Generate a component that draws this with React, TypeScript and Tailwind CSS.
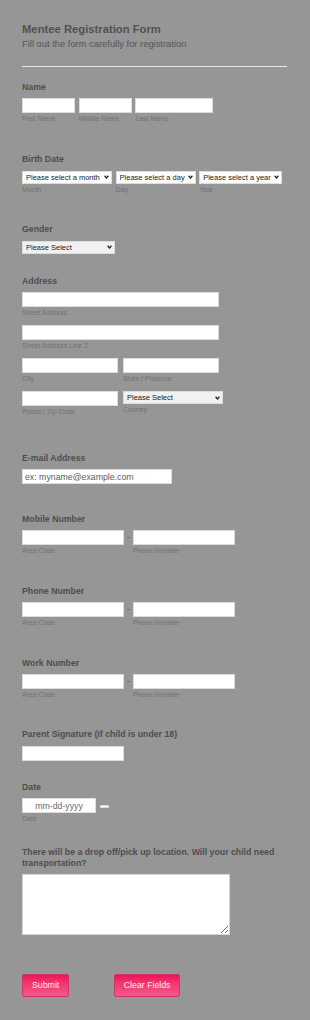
import React from "react";

const label = "block text-[8.75px] leading-[11px] font-bold text-[#4e4e4e]";
const sub = "block mt-[1px] text-[6.9px] leading-[9px] text-[#727272]";
const inp = "block h-[15px] bg-white border border-[#dddddd] outline-none";

function Sel({ text, w, bg }: { text: string; w: string; bg: string }) {
  return (
    <div className={`relative ${w}`}>
      <select
        className={`appearance-none block w-full h-[13px] ${bg} border border-[#dddddd] pl-[3px] pr-[10px] text-[7.5px] leading-[11px] text-[#1a1a1a] outline-none`}
        defaultValue="x"
      >
        <option value="x">{text}</option>
      </select>
      <svg
        className="absolute right-[3px] top-[4.5px] pointer-events-none"
        width="5"
        height="4"
        viewBox="0 0 10 8"
      >
        <path d="M1.2 1.5 L5 6 L8.8 1.5" stroke="#1e1e1e" strokeWidth="2.4" fill="none" />
      </svg>
    </div>
  );
}

function PhoneRow() {
  return (
    <div className="flex mt-[5px]">
      <div className="w-[102px]">
        <input className={`${inp} w-full`} />
        <span className={sub}>Area Code</span>
      </div>
      <div className="w-[9px] h-[15px] flex items-center justify-center">
        <div className="w-[3px] h-[1px] bg-[#6e6e6e]" />
      </div>
      <div className="w-[102px]">
        <input className={`${inp} w-full`} />
        <span className={sub}>Phone Number</span>
      </div>
    </div>
  );
}

export default function App() {
  return (
    <div className="min-h-[1020px] w-full bg-[#969696] font-['Liberation_Sans',Arial,sans-serif]">
      <div className="pt-[22px] px-[22px] pb-[23px]">
        <h1 className="text-[11.25px] leading-[14px] font-bold text-[#515151]">Mentee Registration Form</h1>
        <p className="mt-[2px] text-[9.375px] leading-[12px] text-[#555]">
          Fill out the form carefully for registration
        </p>
        <div className="mt-[16px] h-px w-[265px] bg-[#e8e8e8]" />

        {/* Name */}
        <span className={`${label} mt-[14.5px]`}>Name</span>
        <div className="mt-[5px] flex gap-[3.4px]">
          <div className="w-[53.3px]">
            <input className={`${inp} w-full`} />
            <span className={sub}>First Name</span>
          </div>
          <div className="w-[53.3px]">
            <input className={`${inp} w-full`} />
            <span className={sub}>Middle Name</span>
          </div>
          <div className="w-[77.7px]">
            <input className={`${inp} w-full`} />
            <span className={sub}>Last Name</span>
          </div>
        </div>

        {/* Birth Date */}
        <span className={`${label} mt-[31.5px]`}>Birth Date</span>
        <div className="mt-[5.5px] flex gap-[3.6px]">
          <div>
            <Sel text="Please select a month" w="w-[90px]" bg="bg-white" />
            <span className={`${sub} mt-[1.5px]`}>Month</span>
          </div>
          <div>
            <Sel text="Please select a day" w="w-[80px]" bg="bg-white" />
            <span className={`${sub} mt-[1.5px]`}>Day</span>
          </div>
          <div>
            <Sel text="Please select a year" w="w-[83px]" bg="bg-white" />
            <span className={`${sub} mt-[1.5px]`}>Year</span>
          </div>
        </div>

        {/* Gender */}
        <span className={`${label} mt-[30.5px]`}>Gender</span>
        <div className="mt-[5.7px]">
          <Sel text="Please Select" w="w-[93px]" bg="bg-[#f1f1f1]" />
        </div>

        {/* Address */}
        <span className={`${label} mt-[22.5px]`}>Address</span>
        <div className="mt-[5px] flex flex-col gap-[8px]">
          <div className="w-[197px]">
            <input className={`${inp} w-full`} />
            <span className={sub}>Street Address</span>
          </div>
          <div className="w-[197px]">
            <input className={`${inp} w-full`} />
            <span className={sub}>Street Address Line 2</span>
          </div>
          <div className="flex gap-[4.7px]">
            <div className="w-[96.3px]">
              <input className={`${inp} w-full`} />
              <span className={sub}>City</span>
            </div>
            <div className="w-[96px]">
              <input className={`${inp} w-full`} />
              <span className={sub}>State / Province</span>
            </div>
          </div>
          <div className="flex gap-[4.7px]">
            <div className="w-[96.3px]">
              <input className={`${inp} w-full`} />
              <span className={sub}>Postal / Zip Code</span>
            </div>
            <div>
              <Sel text="Please Select" w="w-[99.7px]" bg="bg-[#f1f1f1]" />
              <span className={`${sub} mt-[1.3px]`}>Country</span>
            </div>
          </div>
        </div>

        {/* Email */}
        <span className={`${label} mt-[37.3px]`}>E-mail Address</span>
        <input
          className={`${inp} mt-[5px] w-[150.3px] px-[2px] text-[8.75px] text-[#333] placeholder:text-[#5c5c5c]`}
          placeholder="ex: myname@example.com"
        />

        {/* Mobile */}
        <span className={`${label} mt-[29.5px]`}>Mobile Number</span>
        <PhoneRow />

        {/* Phone */}
        <span className={`${label} mt-[31px]`}>Phone Number</span>
        <PhoneRow />

        {/* Work */}
        <span className={`${label} mt-[30.7px]`}>Work Number</span>
        <PhoneRow />

        {/* Parent Signature */}
        <span className={`${label} mt-[30.8px]`}>Parent Signature (If child is under 18)</span>
        <input className={`${inp} mt-[5.2px] w-[102px]`} />

        {/* Date */}
        <span className={`${label} mt-[21.8px]`}>Date</span>
        <div className="mt-[4.8px] flex items-center">
          <input
            className={`${inp} w-[74px] text-center text-[8.75px] text-[#333] placeholder:text-[#6a6a6a]`}
            placeholder="mm-dd-yyyy"
          />
          <div className="ml-[4px] mt-[1px] w-[9px] h-[3px] bg-white border-[0.5px] border-[#d8d8d8]" />
        </div>
        <span className={`${sub} mt-[1.5px]`}>Date</span>

        {/* Transportation */}
        <span className={`${label} mt-[24px] leading-[10.5px]`}>
          There will be a drop off/pick up location. Will your child need transportation?
        </span>
        <textarea className="block mt-[4.5px] w-[208.3px] h-[61.5px] bg-white border border-[#d4d4d4] outline-none" />

        {/* Buttons */}
        <div className="mt-[38.5px] flex gap-[45px]">
          <button className="h-[23px] w-[47.3px] rounded-[2px] border border-[#d23468] bg-gradient-to-b from-[#ef0d5b] to-[#f2578a] text-[8.75px] text-[#fde8ef]">
            Submit
          </button>
          <button className="h-[23px] w-[65.7px] rounded-[2px] border border-[#d23468] bg-gradient-to-b from-[#ef0d5b] to-[#f2578a] text-[8.75px] text-[#fde8ef]">
            Clear Fields
          </button>
        </div>
      </div>
    </div>
  );
}
